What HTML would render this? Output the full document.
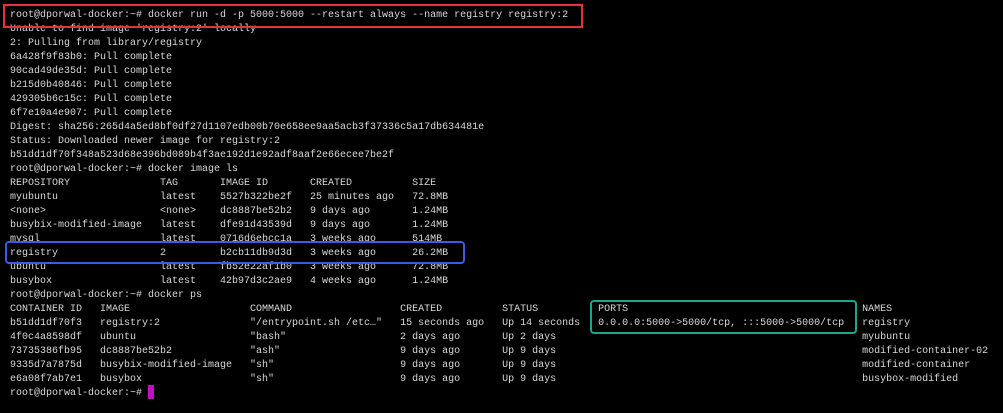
<!DOCTYPE html>
<html><head><meta charset="utf-8"><style>
html,body{margin:0;padding:0;background:#000;width:1003px;height:413px;overflow:hidden}
pre{position:absolute;left:10px;top:9px;margin:0;font-family:"Liberation Mono","DejaVu Sans Mono",monospace;font-size:10px;line-height:14px;color:#d8d8d8;letter-spacing:0}
.b{position:absolute;box-sizing:border-box}
</style></head><body>
<pre>root@dporwal-docker:~# docker run -d -p 5000:5000 --restart always --name registry registry:2
Unable to find image 'registry:2' locally
2: Pulling from library/registry
6a428f9f83b0: Pull complete
90cad49de35d: Pull complete
b215d0b40846: Pull complete
429305b6c15c: Pull complete
6f7e10a4e907: Pull complete
Digest: sha256:265d4a5ed8bf0df27d1107edb00b70e658ee9aa5acb3f37336c5a17db634481e
Status: Downloaded newer image for registry:2
b51dd1df70f348a523d68e396bd089b4f3ae192d1e92adf8aaf2e66ecee7be2f
root@dporwal-docker:~# docker image ls
REPOSITORY               TAG       IMAGE ID       CREATED          SIZE
myubuntu                 latest    5527b322be2f   25 minutes ago   72.8MB
&lt;none&gt;                   &lt;none&gt;    dc8887be52b2   9 days ago       1.24MB
busybix-modified-image   latest    dfe91d43539d   9 days ago       1.24MB
mysql                    latest    0716d6ebcc1a   3 weeks ago      514MB
registry                 2         b2cb11db9d3d   3 weeks ago      26.2MB
ubuntu                   latest    fb52e22af1b0   3 weeks ago      72.8MB
busybox                  latest    42b97d3c2ae9   4 weeks ago      1.24MB
root@dporwal-docker:~# docker ps
CONTAINER ID   IMAGE                    COMMAND                  CREATED          STATUS          PORTS                                       NAMES
b51dd1df70f3   registry:2               "/entrypoint.sh /etc…"   15 seconds ago   Up 14 seconds   0.0.0.0:5000-&gt;5000/tcp, :::5000-&gt;5000/tcp   registry
4f0c4a8598df   ubuntu                   "bash"                   2 days ago       Up 2 days                                                   myubuntu
73735386fb95   dc8887be52b2             "ash"                    9 days ago       Up 9 days                                                   modified-container-02
9335d7a7875d   busybix-modified-image   "sh"                     9 days ago       Up 9 days                                                   modified-container
e6a08f7ab7e1   busybox                  "sh"                     9 days ago       Up 9 days                                                   busybox-modified
root@dporwal-docker:~# </pre>
<div class="b" style="left:3px;top:4px;width:580px;height:24px;border:2px solid #e8303a"></div>
<div class="b" style="left:5px;top:241px;width:460px;height:23px;border:2px solid #3a5ce8;border-radius:4px"></div>
<div class="b" style="left:590px;top:300px;width:267px;height:34px;border:2px solid #18a88a;border-radius:4px"></div>
<div class="b" style="left:148px;top:385px;width:6px;height:14px;background:#c010c0"></div>
</body></html>
